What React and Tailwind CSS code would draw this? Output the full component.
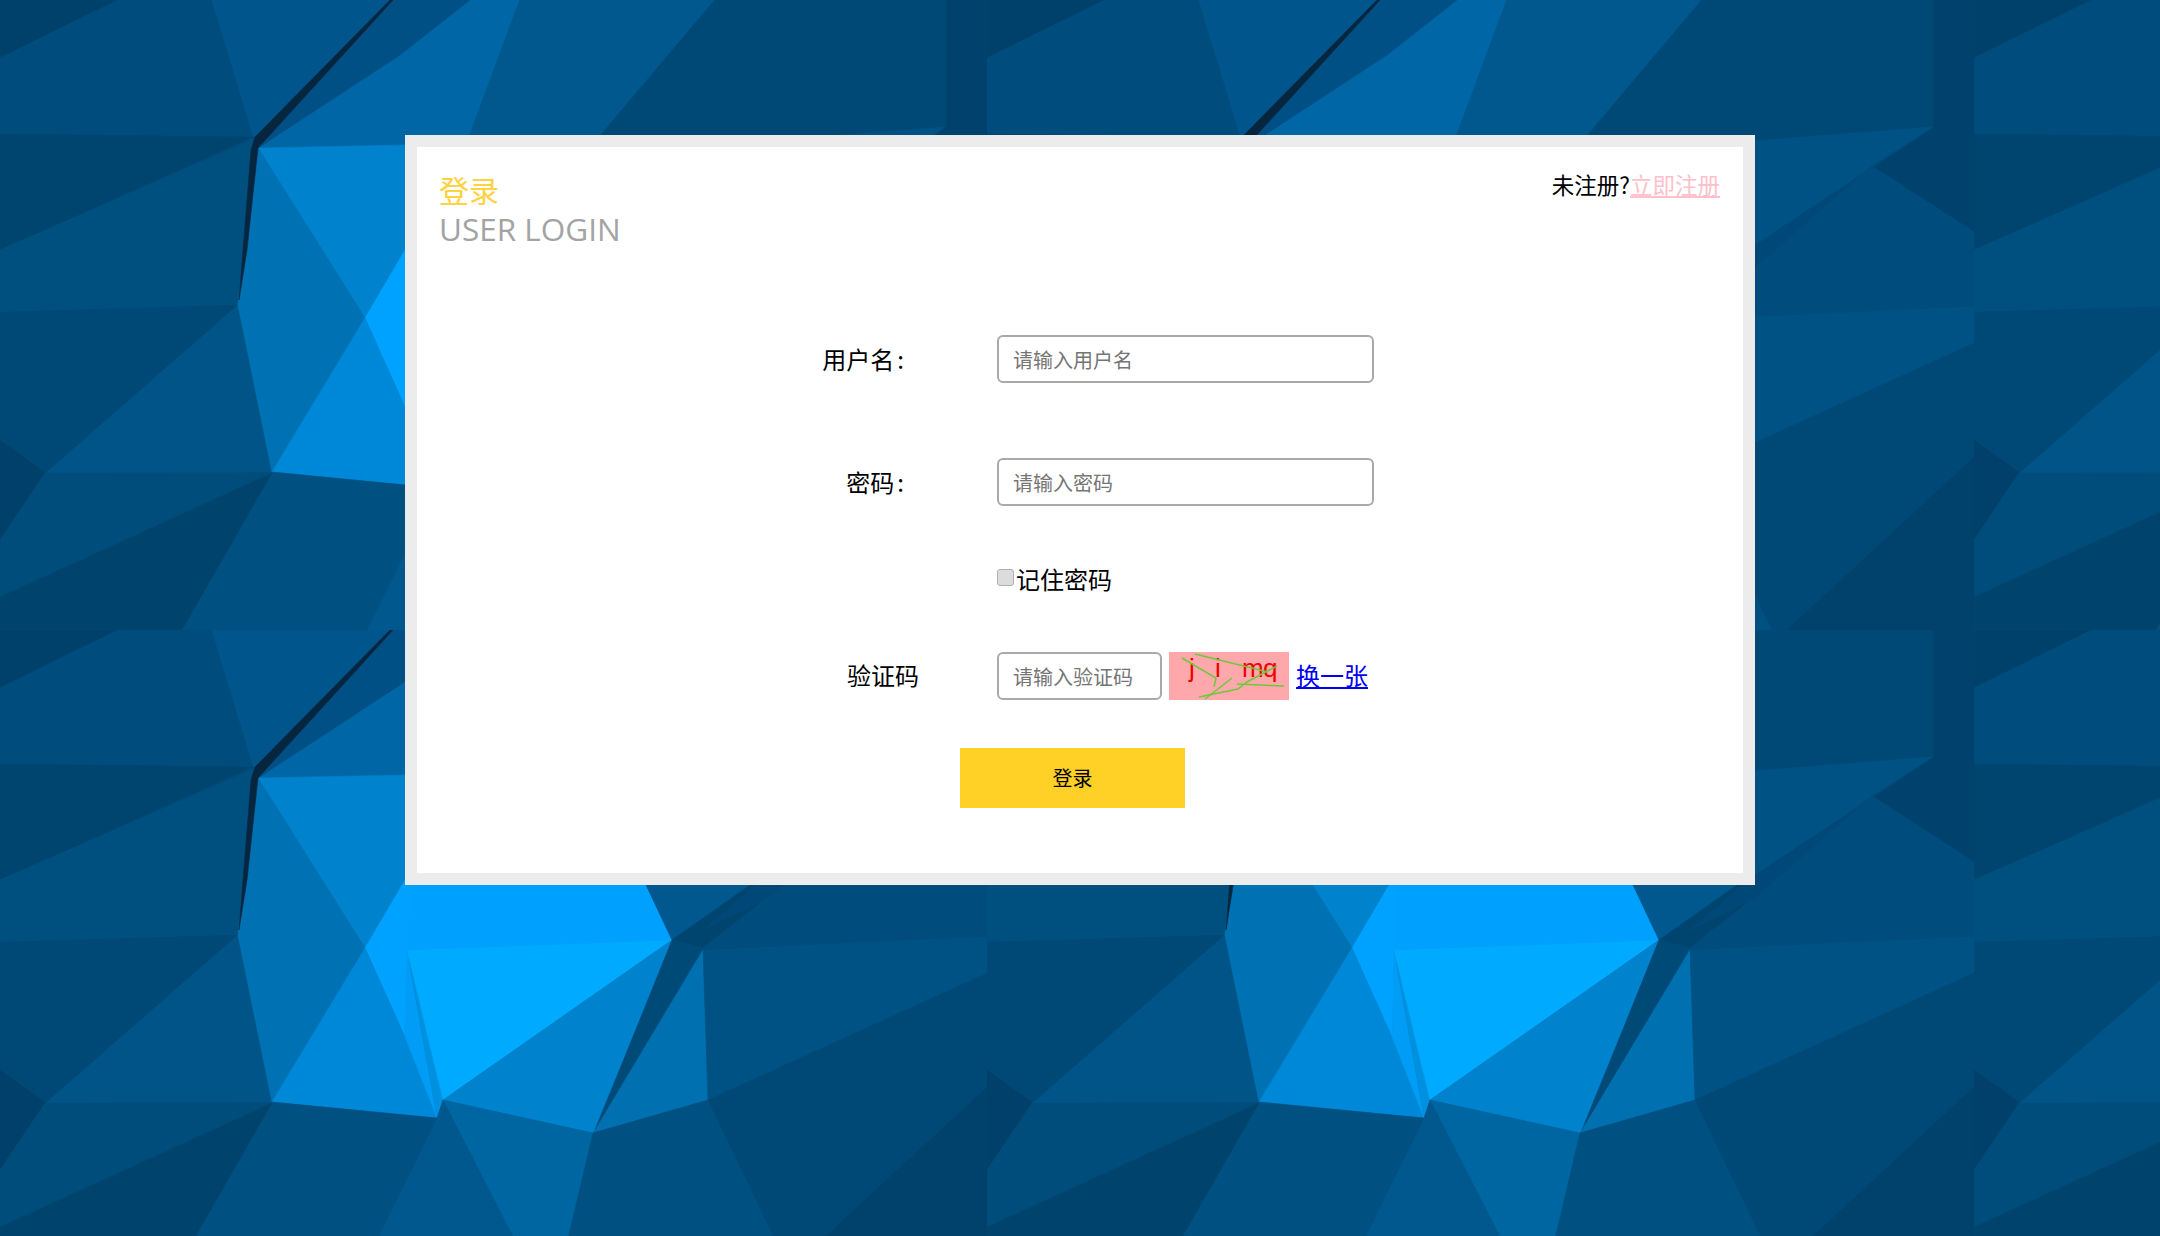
import React from 'react'

// one tile of the low-poly wallpaper, it repeats every 987x630
const facets = [
  ['#00426e', '946,0 987,0 987,232 885,166 946,127'],
  ['#004875', '714,0 946,0 946,127 768,141 600,135'],
  ['#005285', '600,135 768,141 946,127 768,245 700,290 500,290 469,135'],
  ['#00588e', '519,0 714,0 600,135 469,135'],
  ['#0066a5', '470,0 519,0 469,135 405,145 258,148 400,55'],
  ['#005086', '392,0 470,0 400,55 258,148'],
  ['#00416c', '0,0 118,0 0,58'],
  ['#004c7c', '0,58 118,0 212,0 253,135 0,134'],
  ['#00568c', '212,0 390,0 255,137 253,135'],
  ['#004470', '0,134 253,137 0,250'],
  ['#00507f', '0,250 254,140 238,305 0,312'],
  ['#004875', '0,312 238,305 46,473 0,440'],
  ['#00406a', '0,440 46,473 0,540'],
  ['#005488', '238,305 272,472 46,473'],
  ['#0082cc', '258,148 405,145 405,250 365,318'],
  ['#0072b4', '258,148 365,318 272,472 238,305'],
  ['#00a2ff', '365,318 405,250 415,200 405,407'],
  ['#0088d8', '365,318 405,407 437,488 272,472'],
  // bright part under the panel
  ['#00a0ff', '415,200 620,200 672,310 407,320'],
  ['#009cf5', '407,320 437,488 405,407'],
  ['#0090e0', '407,320 443,470 437,488'],
  ['#00aaff', '407,320 672,310 443,470'],
  ['#0082cc', '672,310 443,470 593,503'],
  ['#00588e', '620,200 750,255 672,310'],
  ['#004570', '672,310 750,255 783,255 702,318'],
  ['#004a78', '672,310 702,318 597,497'],
  ['#0070b0', '703,320 708,470 593,503 597,497'],
  ['#005285', '703,320 987,307 987,343 708,470'],
  ['#004c7c', '768,268 885,166 987,232 987,305 703,320'],
  ['#004877', '946,127 768,245 703,300 768,268 885,166'],
  ['#0066a2', '443,470 593,503 563,630 525,630'],
  ['#00588e', '443,470 525,630 367,630 400,563 437,488'],
  ['#005082', '272,472 437,488 400,563 367,630 182,630'],
  ['#005082', '593,503 708,470 785,630 563,630'],
  ['#004875', '708,470 987,343 987,457 800,630 785,630'],
  ['#00426c', '987,457 800,630 987,630'],
  ['#004c7a', '45,473 272,473 0,597 0,540'],
  ['#00446e', '272,473 182,630 0,630 0,597'],
  ['#06253f', '390,0 393,0 268,137 258,148 247,250 239,300 251,150 255,137'],
]

const Wallpaper = () => (
  <svg className="absolute inset-0 w-full h-full" aria-hidden="true">
    <defs>
      <pattern id="tile" width="987" height="630" patternUnits="userSpaceOnUse">
        <rect width="987" height="630" fill="#004c7c" />
        {facets.map(([fill, points], i) => (
          <polygon key={i} fill={fill} stroke={fill} strokeWidth="0.6" points={points} />
        ))}
      </pattern>
    </defs>
    <rect width="100%" height="100%" fill="url(#tile)" />
  </svg>
)

const Captcha = () => (
  <svg width="120" height="48" viewBox="0 0 120 48" className="block bg-[#ffa8ab] ml-[7px]">
    <g fill="#f00000" fontSize="26" fontFamily="'Liberation Sans', sans-serif">
      <text x="20" y="25">j</text>
      <text x="46" y="25">i</text>
      <text x="73" y="25">m</text>
      <text x="94" y="25">q</text>
    </g>
    <g fill="none" stroke="#6ec83c" strokeWidth="1.5">
      <polyline points="26,2 99,20" />
      <polyline points="13,6 47,26 45,35" />
      <polyline points="63,26 36,47" />
      <polyline points="30,45 69,37 78,30 108,14" />
      <polyline points="68,32 115,34" />
    </g>
  </svg>
)

const inputClass =
  "h-12 px-[14px] bg-white border-2 border-[#a9a9a9] rounded-[6px] text-[20px] outline-none placeholder:text-[#757575]"

export default function App() {
  return (
    <div className="relative h-screen overflow-hidden pt-[135px] font-['Noto_Sans_CJK_SC','Noto_Sans',sans-serif] text-black">
      <Wallpaper />

      <div className="relative w-[1350px] h-[750px] mx-auto bg-white border-12 border-[#ececec]">
        {/* Header */}
        <div className="flex justify-between pl-[22px] pr-[23px] pt-[23px]">
          <div>
            <h1 className="text-[30px] leading-[38px] text-[#ffd23f]">登录</h1>
            <p className="text-[31.5px] leading-[41px] text-[#a3a3a3] font-['Open_Sans',sans-serif]">USER LOGIN</p>
          </div>
          <div className="pt-[1px] text-[22.5px] leading-[26px]">
            未注册?<a href="#" className="text-[#ffc0cb] underline">立即注册</a>
          </div>
        </div>

        {/* Form */}
        <form className="ml-[403px] mt-[86px]">
          <div className="flex items-center">
            <label className="w-[177px] pr-[93px] text-right text-[24px]">用户名<span className="ml-[3px]">:</span></label>
            <input className={`${inputClass} w-[377px]`} placeholder="请输入用户名" />
          </div>
          <div className="flex items-center mt-[75px]">
            <label className="w-[177px] pr-[93px] text-right text-[24px]">密码<span className="ml-[3px]">:</span></label>
            <input className={`${inputClass} w-[377px]`} placeholder="请输入密码" />
          </div>
          <div className="flex items-center mt-[57px] ml-[177px] h-[32px]">
            <input type="checkbox" className="appearance-none w-[17px] h-[17px] -mt-[4px] bg-[#dcdcdc] border border-[#b0b0b0] rounded-[3px]" />
            <span className="ml-[2px] text-[24px]">记住密码</span>
          </div>
          <div className="flex items-center mt-[57px]">
            <label className="w-[177px] pl-[27px] -mt-[2px] text-[24px]">验证码</label>
            <input className={`${inputClass} w-[165px]`} placeholder="请输入验证码" />
            <Captcha />
            <a href="#" className="ml-[7px] -mt-[3px] text-[24px] text-[#0000ee] underline">换一张</a>
          </div>
          <button type="button" className="block w-[225px] h-[60px] mt-[48px] ml-[140px] bg-[#ffd026] text-[20px]">登录</button>
        </form>
      </div>
    </div>
  )
}
